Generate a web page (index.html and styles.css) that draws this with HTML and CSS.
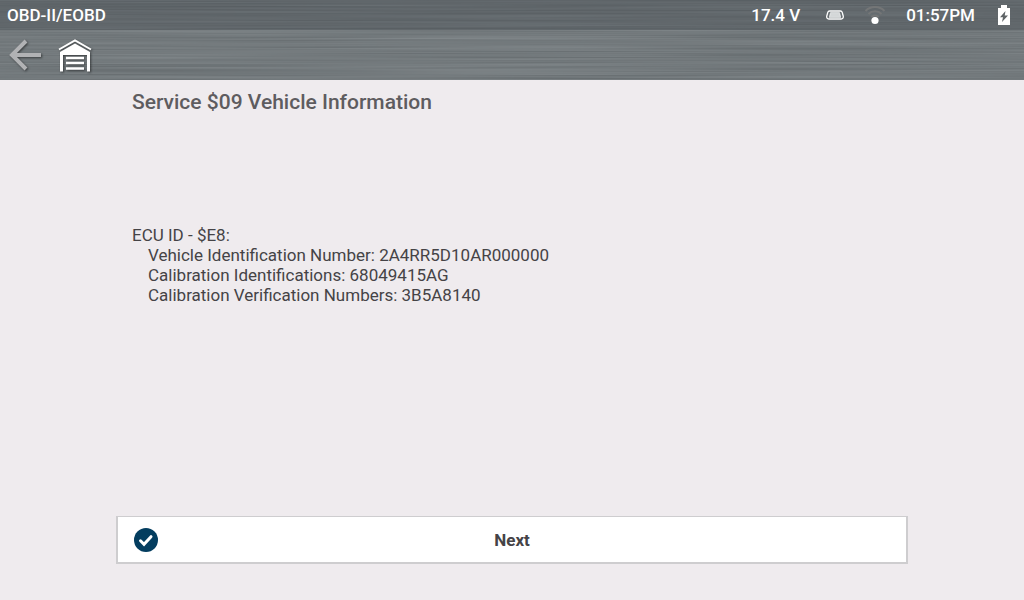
FILE: index.html
```html
<!DOCTYPE html>
<html lang="en">
<head>
    <meta charset="UTF-8">
    <meta name="viewport" content="width=device-width, initial-scale=1.0">
    <title>OBD-II/EOBD</title>
    <link rel="stylesheet" href="styles.css">
</head>
<body>

    <header class="header">
        <div class="status-bar">
            <h1 class="app-title">OBD-II/EOBD</h1>
            <span class="voltage">17.4 V</span>
            <svg class="connector-icon" width="18" height="10" viewBox="0 0 18 10" aria-hidden="true">
                <path d="M3.500 1h11c1.100 0 1.500.6 1.800 1.600l.9 3.400c.4 1.800-.5 3-2 3H2.800C1.300 9 .4 7.800.8 6l.9-3.400C2 1.600 2.400 1 3.500 1z" fill="none" stroke="#fff" stroke-width="1.300"/>
                <path d="M4.500 2.600h9l1.300 4.800H3.200z" fill="#d4d7d8" stroke="#fff" stroke-width=".6"/>
            </svg>
            <svg class="wifi-icon" width="22" height="20" viewBox="0 0 22 20" aria-hidden="true">
                <g fill="none" stroke="#747677" stroke-width="2">
                    <path d="M1.500 6c5.200-5.200 13.800-5.200 19 0"/>
                    <path d="M4.500 9c3.600-3.600 9.400-3.600 13 0"/>
                    <path d="M7.300 12c2-2 5.400-2 7.400 0"/>
                </g>
                <circle cx="11" cy="15.500" r="3.600" fill="#fff"/>
            </svg>
            <span class="clock">01:57PM</span>
            <svg class="battery-icon" width="12" height="20" viewBox="0 0 12 20" aria-hidden="true">
                <path d="M3 0h6v3h3v17H0V3h3z" fill="#fff"/>
                <path d="M7.500 6L2 12.200h3L4 17l6-6.500H6.700z" fill="#5e6366"/>
            </svg>
        </div>
        <nav class="toolbar">
            <button type="button" class="icon-button" aria-label="Back">
                <svg width="34" height="34" viewBox="0 0 34 34">
                    <path d="M33 17H4M18 3L4 17l14 14" fill="none" stroke="#b1b2b4" stroke-width="4"/>
                </svg>
            </button>
            <button type="button" class="icon-button" aria-label="Garage">
                <svg width="34" height="34" viewBox="0 0 34 34">
                    <path d="M1 11.500L17 2.500l16 9" fill="none" stroke="#fff" stroke-width="2"/>
                    <path d="M2 14L17 5.500 32 14v19.500h-3V17H5v16.500H2z" fill="#fff"/>
                    <path d="M8 20h18M8 25h18M8 30.500h18" stroke="#fff" stroke-width="2.600"/>
                </svg>
            </button>
        </nav>
    </header>

    <main class="content">
        <h2 class="page-title">Service $09 Vehicle Information</h2>
        <div class="vehicle-info">
            <p>ECU ID - $E8:</p>
            <ul class="info-list">
                <li>Vehicle Identification Number: 2A4RR5D10AR000000</li>
                <li>Calibration Identifications: 68049415AG</li>
                <li>Calibration Verification Numbers: 3B5A8140</li>
            </ul>
        </div>
    </main>

    <footer class="actions">
        <button type="button" class="next-button">
            <svg width="24" height="24" viewBox="0 0 24 24" aria-hidden="true">
                <circle cx="12" cy="12" r="12" fill="#033d5f"/>
                <path d="M6.500 12.800l3.500 3.500 7-7.600" fill="none" stroke="#fff" stroke-width="3" stroke-linecap="round"/>
            </svg>
            <span>Next</span>
        </button>
    </footer>

</body>
</html>
```
FILE: styles.css
```css
* {
    box-sizing: border-box;
}

body {
    display: flex;
    flex-direction: column;
    min-height: 100vh;
    margin: 0;
    font-family: Roboto, Arial, sans-serif;
    font-size: 17px;
    line-height: 20px;
    color: #454346;
    background-color: #efebee;
}

/* brushed metal */
.header {
    color: #fff;
    background-color: #73797c;
    background-image: url("data:image/svg+xml,%3Csvg xmlns='http://www.w3.org/2000/svg' width='1024' height='80'%3E%3Cfilter id='m' x='0' y='0' width='100%25' height='100%25' color-interpolation-filters='sRGB'%3E%3CfeTurbulence type='fractalNoise' baseFrequency='0.003 0.6' numOctaves='2' seed='4'/%3E%3CfeColorMatrix values='0.15 0 0 0 0.375 0.15 0 0 0 0.4 0.15 0 0 0 0.412 0 0 0 0 1'/%3E%3C/filter%3E%3Crect width='1024' height='80' filter='url(%23m)'/%3E%3C/svg%3E");
}

.status-bar {
    display: flex;
    align-items: center;
    height: 30px;
    padding: 0 14px 0 7px;
    font-weight: 500;
    background-color: rgba(60, 66, 70, 0.32);
}

.app-title {
    margin: 0 auto 0 0;
    font-size: 17px;
    font-weight: 500;
}

.connector-icon {
    margin-left: 26px;
}

.wifi-icon {
    margin: 0 20px;
}

.battery-icon {
    margin-left: 23px;
}

.toolbar {
    display: flex;
    align-items: center;
    gap: 16px;
    height: 50px;
    padding: 0 8px;
}

.icon-button {
    display: flex;
    padding: 0;
    border: none;
    background: none;
    cursor: pointer;
}

.icon-button svg {
    filter: drop-shadow(1px 1px 1px rgba(0, 0, 0, 0.5));
}

.content {
    flex: 1;
    padding: 10px 132px;
}

.page-title {
    margin: 0;
    font-size: 21px;
    font-weight: 500;
    line-height: 24px;
    color: #5e5c5f;
}

.vehicle-info {
    margin-top: 111px;
}

.vehicle-info p {
    margin: 0;
}

.info-list {
    margin: 0;
    padding-left: 16px;
    list-style-type: none;
}

.actions {
    padding: 0 116px 36px;
}

.next-button {
    display: grid;
    grid-template-columns: 24px 1fr 24px;
    align-items: center;
    width: 100%;
    height: 48px;
    padding: 0 16px;
    border: 2px solid #cecdcf;
    border-top-width: 1px;
    color: #454346;
    background-color: #fff;
    font-family: inherit;
    font-size: 17px;
    font-weight: 700;
    cursor: pointer;
}
```
